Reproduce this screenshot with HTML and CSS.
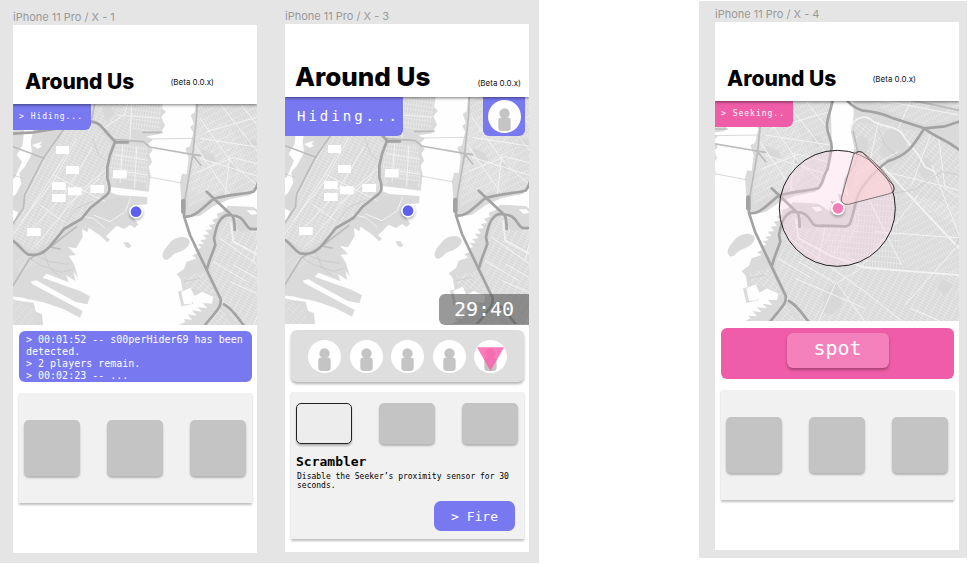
FILE: index.html
```html
<!DOCTYPE html>
<html lang="en">
<head>
<meta charset="utf-8">
<title>Around Us</title>
<link rel="stylesheet" href="styles.css">
</head>
<body>
<svg class="defs" aria-hidden="true">
  <defs>
    <pattern id="grid-a" width="15" height="9" patternUnits="userSpaceOnUse" patternTransform="rotate(28)"><path d="M0 0H15M0 0V9" class="street"/></pattern>
    <pattern id="grid-b" width="8" height="14" patternUnits="userSpaceOnUse" patternTransform="rotate(8)"><path d="M0 0H8M0 0V14" class="street"/></pattern>
    <pattern id="grid-c" width="8" height="19" patternUnits="userSpaceOnUse" patternTransform="rotate(-27)"><path d="M0 0H8M0 0V19" class="street"/></pattern>
    <pattern id="grid-d" width="20" height="8" patternUnits="userSpaceOnUse" patternTransform="rotate(28)"><path d="M0 0H20M0 0V8" class="street"/></pattern>
    <pattern id="grid-e" width="9" height="17" patternUnits="userSpaceOnUse" patternTransform="rotate(5)"><path d="M0 0H9M0 0V17" class="street"/></pattern>
    <pattern id="grid-f" width="18" height="10" patternUnits="userSpaceOnUse" patternTransform="rotate(40)"><path d="M0 0H18M0 0V10" class="street"/></pattern>
    <g id="city">
      <rect x="0" y="0" width="1200" height="720" class="water"/>
      <!-- west shore -->
      <path class="land" d="M0 0H492L486 40L498 50L484 66L495 92L478 118L440 124L458 134L446 146L458 166L448 178L456 200L446 215L452 240L446 290L400 284L330 276L332 292L352 300L442 306L442 328L412 330L396 362L412 384L404 398L390 390L372 402L350 392L318 424L330 434L322 442L298 420L266 398L262 412L246 402L248 426L228 460L204 456L228 480L206 482L222 506L234 548L220 530L226 558L198 540L206 562L140 536L128 548L240 588L270 604L262 628L226 620L130 568L110 556L92 560L98 568L248 648L240 668L190 642L130 622L94 614L39 604L100 622L108 650L126 658L130 700H0Z"/>
      <path class="water" d="M72 104L100 106L92 140L96 176L74 216L58 234L64 266L46 300L0 320V268L44 250L56 222L66 200L50 180L68 150ZM39 344L54 352L44 376L0 400V350ZM96 150L124 168L132 158L118 150L126 140ZM20 604L70 608L104 624L60 618L20 608Z"/>
      <path fill="url(#grid-a)" d="M190 104L276 80L335 145L318 210L325 288L240 368L150 440L100 470L39 430V390L76 340L78 300L132 190Z"/>
      <path fill="url(#grid-a)" d="M276 0H392L390 128L345 132L290 80L270 60Z"/>
      <path fill="url(#grid-b)" d="M392 0H486L480 104L440 110L392 100ZM348 148L440 150L444 280L338 266L328 215Z"/>
      <path fill="url(#grid-f)" opacity=".6" d="M39 500L90 470L130 480L110 510L60 530ZM39 612L100 640L104 690H39Z"/>
      <path class="park" d="M132 110L180 110L130 180L96 172L130 152ZM39 310L64 284L70 320L60 344L39 335ZM350 306L396 310L376 356L318 400L240 378L290 330ZM346 252L436 262V286L346 276ZM306 40L330 32L344 60L318 78Z"/>
      <path class="thin" d="M84 486L120 510L184 532L214 524M100 480L150 500L204 508M278 130L296 180L316 196M39 240L70 250M130 470L150 520L180 545M280 318L230 340L200 380"/>
      <path class="white-road" d="M240 362L280 370L316 400M392 308L376 350L330 380L280 360M64 380L160 260L230 130M80 420L190 300L276 160M39 420L120 300L190 190M105 455L250 280L322 220M200 330L300 250M160 240L316 320M120 330L190 380M310 100L372 60L392 0M350 60L480 70M395 20L390 138M368 150L360 264M410 155L404 278M344 180L444 196M342 226L444 240"/>
      <path class="land" d="M370 442L384 442L394 452L388 460L378 456ZM400 378L416 388L404 398L394 390Z"/>
      <path class="land" d="M488 486C486 472 496 460 508 446C520 430 535 426 552 426C566 430 572 436 568 446C562 460 544 470 528 474C514 480 508 498 494 494Z"/>
      <!-- peninsula between the two rivers -->
      <path class="land" d="M590 0H812L798 62L800 150L790 222L776 276L752 300L690 312L640 334L600 362L556 368L546 340L540 262L546 236L560 238L566 190L556 160L570 154L580 112L570 96L582 88L572 60L584 52Z"/>
      <path fill="url(#grid-c)" d="M596 0H806L792 62L794 150L784 222L768 284L650 300L566 340L562 250L582 180Z"/>
      <path fill="url(#grid-d)" opacity=".7" d="M596 60L690 90L740 200L700 280L640 300L574 290L582 180Z"/>
      <path class="park" d="M600 160L640 178L650 200L620 204ZM740 130L772 140L768 166L742 156ZM690 200L712 214L704 232L686 220Z"/>
      <path class="white-road" d="M600 70L700 210L768 268M640 0L780 180M700 0L796 120M590 232L700 188L796 212M600 190L780 246M620 110L795 60M584 150L660 260L690 300M690 180L676 300M600 130L796 160"/>
      <!-- southern and eastern districts -->
      <path class="land" d="M864 0H1200V720H542L560 696L538 690L556 680L550 672L576 674L562 658L590 662L576 646L606 650L592 636L622 640L608 624L636 626L640 606L606 590L578 606L580 626L544 634L534 590L548 586L542 552L530 538L552 522L560 500L590 490L576 482L596 472L584 466L604 458L592 448L612 446L600 436L620 432L608 420L628 418L616 406L636 402L626 390L646 386L636 374L654 368L650 356L668 350L684 332L760 336L800 362L822 358L800 330L812 326L824 352L830 342L818 306L836 312L828 290L850 316L842 262L868 170L858 120L866 72Z"/>
      <path class="water" d="M544 590L572 578L584 604L576 626L552 628ZM740 346L764 346L772 356L754 360Z"/>
      <path fill="url(#grid-d)" d="M650 450L660 380L700 360L752 400L850 404L890 300L880 420L830 470L900 530L1200 540V720H730L670 628L630 530Z"/>
      <path fill="url(#grid-e)" d="M752 408L860 404L900 290L960 240L1000 320L1010 530L900 528L800 490Z"/>
      <path fill="url(#grid-f)" d="M870 90L1078 120L1020 180L950 220L880 300L860 250ZM1086 120L1200 190V420L1060 340L960 240L1030 190Z"/>
      <path fill="url(#grid-c)" d="M1000 300L1200 350V545L1010 530ZM880 0H1200V80L1080 100L960 56Z"/>
      <path fill="url(#grid-f)" d="M552 546L614 530L656 618L640 604L606 588L560 578ZM640 650L668 640L700 700H614Z"/>
      <path class="park" d="M780 600L812 572L836 598L828 640L800 670L772 660ZM960 116L1000 110L1028 150L1012 196L970 214L942 186ZM1060 190L1096 206L1108 246L1080 262L1054 230ZM1096 20L1150 34L1140 60L1092 50ZM880 130L912 140L904 190L872 178ZM700 376L730 372L752 408L716 410ZM1130 560L1166 580L1140 610L1116 590Z"/>
      <path class="white-road wide" d="M692 380L700 440L800 494L900 528L1200 552M858 106C866 80 900 66 920 86C950 110 1000 96 1020 140C1040 170 1060 180 1080 226L1110 240M950 222L1182 470"/>
      <path class="white-road" d="M660 430L900 600L1050 720M815 574L880 536L1060 310M700 510L812 574L760 690M815 574L900 690M960 240L1200 300M930 420L1200 440M1020 640L1180 460M1036 650L1200 720M1100 220L1182 430M900 300L1010 520M780 410L760 500M1100 120L1040 280M690 560L900 650M940 90L910 230M1050 0L1000 110M920 20L1180 70M640 500L740 560M870 250L1000 180M1120 130L1140 290L1200 330"/>
      <path class="thin" d="M980 306L1050 294L1090 266L1130 240L1182 250M890 190L870 240L850 290M940 110L960 160L1000 196M552 560L600 550M1170 470L1182 440"/>
      <path class="road mid" d="M865 120L878 180L870 220L842 260L828 330M1000 20L1090 36L1182 56M800 330L826 366"/>
      <!-- bridges -->
      <path class="thin" d="M450 132L580 130M448 246L544 264"/>
      <path class="road mid" d="M39 155L132 190M190 104L130 190L74 300L70 340L39 386M39 572L88 492L150 456L230 395M284 27L276 70M345 134L430 140L448 156L576 178L602 210M592 0L590 60L578 180L552 330M576 178L602 182M428 112L486 112M150 456L180 462"/>
      <path class="road" d="M39 116L100 112L186 98L275 80C296 82 302 92 316 108L345 140L330 180L322 216L322 250C332 280 332 294 312 306L270 340L244 372L192 402L150 454C126 480 110 482 84 478C70 472 54 446 39 438M345 142L384 142"/>
      <path class="road" d="M550 320L552 364C580 370 600 346 640 312C690 298 730 298 760 290C772 280 776 250 788 232L800 170C802 140 784 130 786 98C788 70 804 40 808 0M620 290L698 364C704 376 704 386 704 405M552 364L570 420L620 525L662 612C664 632 656 640 640 660L612 694M620 525L628 498L646 450L642 430C648 400 654 370 680 360C720 360 728 372 738 388C746 402 752 404 771 402L842 404C856 402 856 392 862 374C872 334 878 300 900 276C920 250 940 228 970 208C1030 190 1046 160 1078 110L1140 104L1182 90L1200 86M820 0C850 30 860 46 890 56C930 60 950 64 980 78L1078 110C1110 138 1130 134 1182 174L1200 186M672 628C700 644 706 660 734 694"/>
      <path class="road mid wide" d="M550 318V350"/>
      <path class="label-box" d="M168 153h39v24h-39zM198 213h39v24h-39zM156 261h41v24h-41zM204 277h41v24h-41zM271 270h41v24h-41zM339 226h41v24h-41zM156 297h41v24h-41zM81 399h41v24h-41z"/>
    </g>
    <g id="person">
      <circle cx="16" cy="16" r="16" fill="#fff"/>
      <circle cx="16" cy="13" r="5" fill="#c4c4c4"/>
      <rect x="10" y="17" width="12" height="13" rx="3" fill="#c4c4c4"/>
    </g>
  </defs>
</svg>

<main class="canvas">
  <section class="board board-hiders">
    <article class="artboard">
      <h2 class="artboard-name">iPhone 11 Pro / X - 1</h2>
      <div class="phone">
        <header class="app-header">
          <h1>Around Us</h1><span class="version">(Beta 0.0.x)</span>
        </header>
        <div class="map">
          <svg viewBox="39 27 732 663" role="img" aria-label="Map">
            <use href="#city"/>
            <circle class="dot-shadow" cx="408" cy="355" r="21"/>
            <circle cx="408" cy="350" r="21" fill="#fff"/><circle cx="408" cy="350" r="16" fill="#5d5fef"/>
          </svg>
          <span class="tag">&gt; Hiding...</span>
        </div>
        <div class="log">&gt; 00:01:52 -- s00perHider69 has been detected.<br>&gt; 2 players remain.<br>&gt; 00:02:23 -- ...</div>
        <div class="panel panel-slots">
          <div class="slots">
            <button class="slot" aria-label="Slot 1"></button><button class="slot" aria-label="Slot 2"></button><button class="slot" aria-label="Slot 3"></button>
          </div>
        </div>
      </div>
    </article>

    <article class="artboard artboard-detail">
      <h2 class="artboard-name">iPhone 11 Pro / X - 3</h2>
      <div class="phone">
        <header class="app-header app-header-large">
          <h1>Around Us</h1><span class="version">(Beta 0.0.x)</span>
        </header>
        <div class="map">
          <svg viewBox="39 9 732 681" role="img" aria-label="Map">
            <use href="#city"/>
            <circle class="dot-shadow" cx="408" cy="355" r="21"/>
            <circle cx="408" cy="350" r="21" fill="#fff"/><circle cx="408" cy="350" r="16" fill="#5d5fef"/>
          </svg>
          <span class="tag tag-large">Hiding...</span>
          <button class="profile" aria-label="Profile"><svg viewBox="0 0 32 32"><use href="#person"/></svg></button>
          <time class="timer">29:40</time>
        </div>
        <ul class="players">
          <li><svg viewBox="0 0 32 32"><use href="#person"/></svg></li>
          <li><svg viewBox="0 0 32 32"><use href="#person"/></svg></li>
          <li><svg viewBox="0 0 32 32"><use href="#person"/></svg></li>
          <li><svg viewBox="0 0 32 32"><use href="#person"/></svg></li>
          <li><svg viewBox="0 0 32 32"><use href="#person"/><path d="M3 7H29L16 30Z" fill="#ff5aa9" fill-opacity=".82"/></svg></li>
        </ul>
        <div class="panel panel-detail">
          <div class="slots">
            <button class="slot slot-selected" aria-label="Scrambler slot"></button><button class="slot" aria-label="Slot 2"></button><button class="slot" aria-label="Slot 3"></button>
          </div>
          <h3>Scrambler</h3>
          <p>Disable the Seeker’s proximity sensor for 30 seconds.</p>
          <button class="fire">&gt; Fire</button>
        </div>
      </div>
    </article>
  </section>

  <section class="board board-seeker">
    <article class="artboard">
      <h2 class="artboard-name">iPhone 11 Pro / X - 4</h2>
      <div class="phone">
        <header class="app-header">
          <h1>Around Us</h1><span class="version">(Beta 0.0.x)</span>
        </header>
        <div class="map">
          <svg viewBox="450 28 732 660" role="img" aria-label="Map">
            <use href="#city"/>
            <circle cx="817" cy="350" r="174" fill="#fcd3e5" fill-opacity=".34" stroke="#222" stroke-width="3"/>
            <path d="M865 192Q870 178 884 180Q892 180 898 186Q952 228 985 280Q992 300 974 306L850 338Q828 340 829 320Z" fill="#ffd2d8" fill-opacity=".6" stroke="#444" stroke-width="2"/>
            <path d="M873 184Q882 176 892 182L984 280Q992 292 984 302" fill="none" stroke="#222" stroke-width="2"/>
            <circle class="dot-shadow" cx="819" cy="355" r="21"/>
            <circle cx="819" cy="350" r="21" fill="#fff"/><circle cx="819" cy="350" r="16" fill="#f47db9"/>
          </svg>
          <span class="tag tag-seeking">&gt; Seeking..</span>
        </div>
        <div class="spot-bar"><button class="spot">spot</button></div>
        <div class="panel panel-slots">
          <div class="slots">
            <button class="slot" aria-label="Slot 1"></button><button class="slot" aria-label="Slot 2"></button><button class="slot" aria-label="Slot 3"></button>
          </div>
        </div>
      </div>
    </article>
  </section>
</main>
</body>
</html>
```
FILE: styles.css
```css
* { box-sizing: border-box; }

:root {
  --mono: "DejaVu Sans Mono", monospace;
  --violet: #7879f1;
  --pink: #ef5da8;
}

body { margin: 0; background: #fff; font-family: Inter, "Liberation Sans", sans-serif; }
h1, h2, h3, p, ul { margin: 0; padding: 0; }
button { margin: 0; padding: 0; border: 0; font-family: inherit; color: inherit; }
.defs { position: absolute; width: 0; height: 0; }

.canvas { display: grid; grid-template-columns: 539fr 160fr 268fr 4fr; align-items: start; }
.board { background: #e5e5e5; }
.board-hiders { display: grid; grid-template-columns: 1fr 1fr; gap: 28px; padding: 9px 10px 10px 13px; }
.board-seeker { grid-column: 3; margin-top: 1px; padding: 5px 8px 8px 16px; }
.artboard { min-width: 0; }
.artboard-detail { margin-top: -1px; }
.artboard-name { font-size: 11px; font-weight: 400; line-height: 16px; color: #999; white-space: nowrap; }
.phone { min-height: 528px; background: #fff; }

.app-header {
  position: relative;
  z-index: 1;
  display: flex;
  justify-content: space-between;
  align-items: center;
  padding: 43px 43px 8px 12px;
  background: #fff;
  box-shadow: 0 1px 3px rgba(0, 0, 0, .5);
  clip-path: inset(0 0 -6px 0);
}
.app-header h1 { font-size: 21px; line-height: 28px; font-weight: 800; color: #000; white-space: nowrap; }
.app-header-large { align-items: baseline; padding: 36px 8px 3px 10px; }
.app-header-large h1 { font-size: 26px; line-height: 34px; }
.version { font-size: 8px; line-height: 10px; color: #111; white-space: nowrap; }

.map { position: relative; }
.map > svg { display: block; width: 100%; height: auto; }
.water { fill: #fefefe; }
.land { fill: #dadada; }
.park { fill: #d8d8d8; }
.street { fill: none; stroke: #f6f6f6; stroke-width: 2; }
.white-road { fill: none; stroke: #f3f3f3; stroke-width: 3; }
.white-road.wide { stroke-width: 5; }
.thin { fill: none; stroke: #c6c6c6; stroke-width: 2; }
.road { fill: none; stroke: #a3a3a3; stroke-width: 8; stroke-linecap: round; stroke-linejoin: round; }
.road.mid { stroke: #bcbcbc; stroke-width: 5; }
.road.mid.wide { stroke: #a3a3a3; stroke-width: 14; }
.label-box { fill: #fff; }
.dot-shadow { fill: #000; opacity: .3; filter: blur(4px); }

.tag {
  position: absolute;
  top: 0;
  left: 0;
  width: 78px;
  padding-left: 6px;
  border-radius: 0 0 6px 0;
  background: var(--violet);
  color: #fff;
  font-family: var(--mono);
  font-size: 8px;
  letter-spacing: 1px;
  line-height: 26px;
  white-space: nowrap;
}
.tag-seeking { background: var(--pink); }
.tag-large { width: 118px; padding-left: 12px; font-size: 14px; letter-spacing: 3px; line-height: 39px; }
.profile {
  position: absolute;
  top: 0;
  right: 4px;
  display: grid;
  place-items: center;
  width: 42px;
  height: 39px;
  border-radius: 0 0 6px 6px;
  background: var(--violet);
}
.profile svg { width: 33px; height: 33px; }
.timer {
  position: absolute;
  right: 0;
  bottom: -1px;
  width: 90px;
  border-radius: 6px 0 0 6px;
  background: rgba(80, 80, 80, .58);
  color: #fff;
  font-family: var(--mono);
  font-size: 20px;
  line-height: 31px;
  text-align: center;
}

.log, .spot-bar, .players { margin: 6px 5px 0 6px; border-radius: 6px; }
.log {
  height: 51px;
  padding: 3px 6px 0 7px;
  background: var(--violet);
  color: #fff;
  font-family: var(--mono);
  font-size: 10px;
  line-height: 12px;
}
.spot-bar { margin-top: 7px; height: 51px; padding-top: 5px; background: var(--pink); text-align: center; }
.spot {
  width: 102px;
  height: 35px;
  padding-bottom: 6px;
  border-radius: 6px;
  background: #f481bb;
  box-shadow: 0 2px 3px rgba(0, 0, 0, .3);
  color: #fff;
  font-family: var(--mono);
  font-size: 20px;
  line-height: 24px;
}
.players {
  display: flex;
  justify-content: space-between;
  align-items: center;
  height: 52px;
  padding: 0 17px;
  background: #dedede;
  box-shadow: 0 2px 3px rgba(0, 0, 0, .3);
  list-style: none;
}
.players li, .players svg { display: block; width: 33px; height: 33px; }

.panel { margin: 11px 5px 0 6px; background: #f1f1f1; box-shadow: 0 2px 2px rgba(0, 0, 0, .25); }
.panel-slots { padding: 27px 6px 27px 5px; }
.panel-detail { margin-top: 10px; padding: 11px 6px 8px 5px; }
.slots { display: flex; justify-content: space-between; }
.slot { width: 56px; height: 56px; border-radius: 5px; background: #c4c4c4; box-shadow: 0 2px 2px rgba(0, 0, 0, .25); }
.panel-detail .slot { height: 41px; }
.panel-detail .slot-selected { border: 1px solid #222; background: #ededed; }
.panel-detail h3 { margin-top: 10px; font-family: var(--mono); font-size: 13px; line-height: 16px; }
.panel-detail p { margin-top: 2px; font-family: var(--mono); font-size: 8px; line-height: 9px; padding-left: 1px; }
.fire {
  display: block;
  width: 81px;
  height: 30px;
  margin: 11px 3px 0 auto;
  border-radius: 7px;
  background: var(--violet);
  color: #fff;
  font-family: var(--mono);
  font-size: 13px;
}
```
